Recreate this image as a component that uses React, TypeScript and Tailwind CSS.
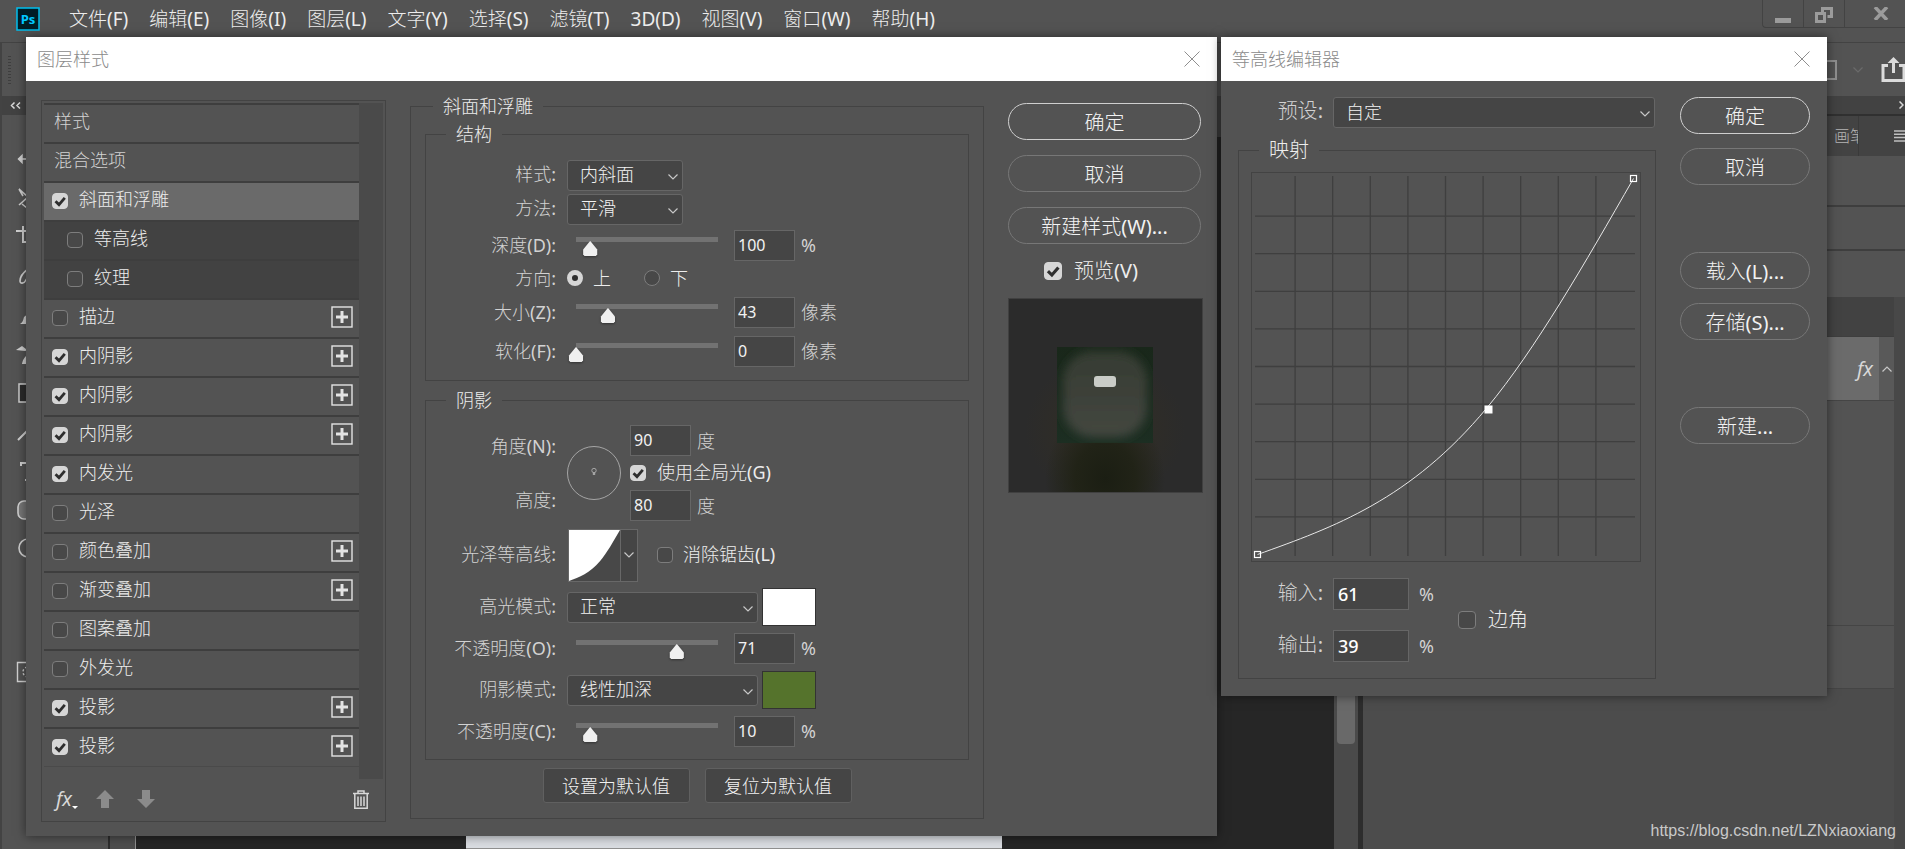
import type { ReactNode } from "react";
import clsx from "clsx";

const menus = [
  "文件(F)",
  "编辑(E)",
  "图像(I)",
  "图层(L)",
  "文字(Y)",
  "选择(S)",
  "滤镜(T)",
  "3D(D)",
  "视图(V)",
  "窗口(W)",
  "帮助(H)",
];

const effects = [
  { name: "斜面和浮雕", checked: true, kind: "active" },
  { name: "等高线", checked: false, kind: "sub" },
  { name: "纹理", checked: false, kind: "sub" },
  { name: "描边", checked: false, add: true },
  { name: "内阴影", checked: true, add: true },
  { name: "内阴影", checked: true, add: true },
  { name: "内阴影", checked: true, add: true },
  { name: "内发光", checked: true },
  { name: "光泽", checked: false },
  { name: "颜色叠加", checked: false, add: true },
  { name: "渐变叠加", checked: false, add: true },
  { name: "图案叠加", checked: false },
  { name: "外发光", checked: false },
  { name: "投影", checked: true, add: true },
  { name: "投影", checked: true, add: true },
];

const tools: ReactNode[] = [
  <path d="M2 12h10M6 8.5L2.5 12 6 15.5z" fill="#d0d0d0" strokeWidth="1.5" />,
  <path d="M3 3l9 8-9 8M6 18l5 4M3 3l4 7" />,
  <path d="M0 6h12M7 1v16h5" strokeWidth="2" />,
  <path d="M12 5C8 8 4 13 4 17c0 3 4 3 6-1l2-3" />,
  <path d="M4 21c2-1 3-3 4-7l5-4v11z" fill="#d0d0d0" strokeWidth="0" />,
  <path d="M0 8l6-4 4 3 3-1v2l-4 1zM6 22c1-5 3-8 7-10v10z" fill="#d0d0d0" strokeWidth="0" />,
  <path d="M3 3h12v18H3z" fill="#2b2b2b" strokeWidth="1.5" />,
  <path d="M2 20l10-10M11 3v8" strokeWidth="2" />,
  <path d="M5 7V4h10M9 21h6" strokeWidth="2" />,
  <rect x="2" y="3" width="20" height="18" rx="6" fill="#777" />,
  <circle cx="12" cy="11" r="9" />,
];

const contourPath = "M0 376C76.4 348.7 152.9 321.4 229.4 229.4C278.2 170.5 327.1 85.3 376 0";

// CJK stays light, the latin runs are set in regular weight
function Mixed({ text }: { text: string }) {
  return (
    <>
      {text.split(/([\x20-\x7e]+)/).map((part, i) =>
        i % 2 ? (
          <span key={i} className="font-normal">
            {part}
          </span>
        ) : (
          part
        )
      )}
    </>
  );
}

function Chevron({ className }: { className?: string }) {
  return (
    <svg viewBox="0 0 10 6" className={clsx("h-[6px] w-[10px]", className)} fill="none" stroke="#c8c8c8" strokeWidth="1.2">
      <path d="M.5.5 5 5 9.5.5" />
    </svg>
  );
}

function CheckBox({ id, checked = false, large = false }: { id: string; checked?: boolean; large?: boolean }) {
  return (
    <span className={clsx("relative flex shrink-0", large ? "size-[18px]" : "size-4")}>
      <input
        id={id}
        type="checkbox"
        defaultChecked={checked}
        className="peer size-full appearance-none rounded-[4px] border border-[#7d7d7d] bg-[#484848] checked:border-[#d6d6d6] checked:bg-[#d6d6d6]"
      />
      <svg
        viewBox="0 0 16 16"
        className="pointer-events-none absolute inset-0 hidden size-full peer-checked:block"
        fill="none"
        stroke="#2e2e2e"
        strokeWidth="2.8"
      >
        <path d="M3.5 8.2 7 11.6 12.8 4.8" />
      </svg>
    </span>
  );
}

function Select({ id, value, className }: { id: string; value: string; className: string }) {
  return (
    <span className={clsx("relative flex", className)}>
      <select
        id={id}
        defaultValue={value}
        className="h-[31px] w-full appearance-none rounded-[3px] border border-[#666] bg-[#454545] pb-0.5 pl-3 leading-6 text-[#f2f2f2]"
      >
        <option>{value}</option>
      </select>
      <Chevron className="pointer-events-none absolute right-[5px] top-[14px]" />
    </span>
  );
}

function NumberBox({ id, value }: { id: string; value: string }) {
  return (
    <input
      id={id}
      type="text"
      defaultValue={value}
      className="h-[31px] w-[61px] border border-[#666] bg-[#454545] pb-0.5 pl-[3px] text-base font-normal text-[#f2f2f2]"
    />
  );
}

function Row({ label, htmlFor, className, children }: { label: string; htmlFor?: string; className: string; children: ReactNode }) {
  return (
    <div className={clsx("flex items-center", className)}>
      <label htmlFor={htmlFor} className="mr-[11px] w-[130px] pb-0.5 text-right text-[#d2d2d2]">
        <Mixed text={label} />
      </label>
      {children}
    </div>
  );
}

function SliderRow({ id, label, value, max, unit }: { id: string; label: string; value: number; max: number; unit: string }) {
  return (
    <Row label={label} htmlFor={id} className="h-[39px]">
      <span className="ml-px mr-2 mt-1 flex h-[22px] w-[158px] bg-[linear-gradient(#727272,#727272)] bg-[length:142px_5px] bg-top bg-no-repeat">
        <input
          type="range"
          aria-label={label}
          defaultValue={value}
          max={max}
          className="h-[22px] w-full appearance-none bg-transparent drop-shadow-[0_1px_1px_#333] [&::-webkit-slider-thumb]:mt-0.5 [&::-webkit-slider-thumb]:h-[15px] [&::-webkit-slider-thumb]:w-4 [&::-webkit-slider-thumb]:appearance-none [&::-webkit-slider-thumb]:bg-[#f0f0f0] [&::-webkit-slider-thumb]:[clip-path:polygon(50%_0,56%_6%,94%_56%,94%_88%,86%_100%,14%_100%,6%_88%,6%_56%,44%_6%)]"
        />
      </span>
      <NumberBox id={id} value={String(value)} />
      <span className="ml-1.5 pb-0.5 text-[#d2d2d2]">
        <Mixed text={unit} />
      </span>
    </Row>
  );
}

function PillButton({ primary = false, label }: { primary?: boolean; label: string }) {
  return (
    <button
      className={clsx(
        "h-[37px] w-full rounded-full border pt-0.5 text-xl leading-8 text-[#f2f2f2]",
        primary ? "border-[#cfcfcf]" : "border-[#777]"
      )}
    >
      <Mixed text={label} />
    </button>
  );
}

function DialogTitle({ children }: { children: ReactNode }) {
  return (
    <div className="flex h-11 items-center justify-between bg-white pl-[11px] pr-[17px]">
      <h2 className="text-lg leading-6 text-[#8a8a8a]">{children}</h2>
      <button aria-label="关闭">
        <svg viewBox="0 0 16 16" className="size-4" fill="none" stroke="#8f8f8f">
          <path d="M.5.5l15 15M15.5.5l-15 15" />
        </svg>
      </button>
    </div>
  );
}

function FieldSet({ title, className, outer = false, children }: { title: string; className?: string; outer?: boolean; children: ReactNode }) {
  return (
    <fieldset className={clsx("min-w-0 border border-[#434343]", className)}>
      <legend className={clsx("px-[10px] leading-6 text-[#ededed]", outer ? "ml-2" : "ml-5")}>{title}</legend>
      {children}
    </fieldset>
  );
}

function FxGlyph() {
  return <span className="font-['Noto_Sans',sans-serif] text-xl font-normal italic leading-6 text-[#d8d8d8]">fx</span>;
}

function StyleList() {
  return (
    <div className="flex w-[345px] flex-col border border-[#434343] p-0.5">
      <div className="flex">
        <ul className="flex-1 pb-3">
          {["样式", "混合选项"].map((name) => (
            <li key={name} className="flex h-[39px] items-center border-t-2 border-[#3e3e3e] pb-1.5 pl-[10px] text-[#d2d2d2]">
              {name}
            </li>
          ))}
          {effects.map((item, i) => (
            <li
              key={i}
              className={clsx(
                "flex h-[39px] items-center border-t-2 border-[#3e3e3e] pb-0.5 pr-1.5",
                item.kind === "active" && "bg-[#6a6a6a]",
                item.kind === "sub" ? "bg-[#424242] pl-[23px]" : "pl-2"
              )}
            >
              <CheckBox id={`effect-${i}`} checked={item.checked} />
              <label htmlFor={`effect-${i}`} className="ml-[11px] flex-1 pb-1 text-[#ededed]">
                {item.name}
              </label>
              {item.add && (
                <button aria-label="添加" className="mb-0.5">
                  <svg viewBox="0 0 22 22" className="size-[22px]" fill="none" stroke="#e4e4e4">
                    <rect x="1" y="1" width="20" height="20" strokeWidth="1.4" />
                    <path d="M11 5v12M5 11h12" strokeWidth="3" />
                  </svg>
                </button>
              )}
            </li>
          ))}
          <li className="border-t border-[#4a4a4a]" />
        </ul>
        <div className="w-6 bg-[#4a4a4a]" />
      </div>
      <div className="flex h-10 items-center pl-3 pr-[14px]">
        <button aria-label="效果" className="flex items-end">
          <FxGlyph />
          <svg viewBox="0 0 6 3" className="mb-0.5 h-[3px] w-[6px]" fill="#fff">
            <path d="M0 0h6L3 3z" />
          </svg>
        </button>
        <button aria-label="上移" className="ml-[18px]">
          <svg viewBox="0 0 18 18" className="size-[18px]" fill="#8b8b8b">
            <path d="M9 0l9 9h-5v9H5V9H0z" />
          </svg>
        </button>
        <button aria-label="下移" className="ml-[23px] flex-1">
          <svg viewBox="0 0 18 18" className="size-[18px]" fill="#8b8b8b">
            <path d="M9 18l9-9h-5V0H5v9H0z" />
          </svg>
        </button>
        <button aria-label="删除">
          <svg viewBox="0 0 16 19" className="h-[19px] w-4" fill="none" stroke="#d8d8d8" strokeWidth="1.5">
            <path d="M0 3.5h16M5 3V1h6v2M1.8 4v14.2h12.4V4M5 6.5v9.5M8 6.5v9.5M11 6.5v9.5" />
          </svg>
        </button>
      </div>
    </div>
  );
}

function Preview() {
  return (
    <svg viewBox="0 0 193 193" className="w-[195px] border border-[#404040] bg-[#2b2b2b]">
      <defs>
        <radialGradient id="haze">
          <stop offset="0.4" stopColor="#302d26" />
          <stop offset="1" stopColor="#302d26" stopOpacity="0" />
        </radialGradient>
        <radialGradient id="ground">
          <stop offset="0" stopColor="#1b1e13" />
          <stop offset="0.5" stopColor="#212317" />
          <stop offset="1" stopColor="#212317" stopOpacity="0" />
        </radialGradient>
        <filter id="glow" x="-50%" y="-50%" width="200%" height="200%">
          <feGaussianBlur stdDeviation="5" />
        </filter>
        <filter id="spark">
          <feGaussianBlur stdDeviation="0.6" />
        </filter>
        <linearGradient id="leaf" x1="0" y1="0" x2="0" y2="1">
          <stop offset="0" stopColor="#19271a" />
          <stop offset="1" stopColor="#1c2e22" />
        </linearGradient>
        <linearGradient id="inner" x1="0" y1="0" x2="0" y2="1">
          <stop offset="0" stopColor="#353b32" />
          <stop offset="1" stopColor="#444740" />
        </linearGradient>
        <clipPath id="square">
          <rect x="48" y="48" width="96" height="96" />
        </clipPath>
      </defs>
      <ellipse cx="96" cy="130" rx="80" ry="72" fill="url(#haze)" />
      <ellipse cx="96" cy="180" rx="60" ry="72" fill="url(#ground)" />
      <rect x="48" y="48" width="96" height="96" fill="url(#leaf)" />
      <g clipPath="url(#square)">
        <rect x="54" y="52" width="84" height="86" rx="30" fill="url(#inner)" filter="url(#glow)" />
      </g>
      <rect x="85" y="77" width="22" height="11" rx="3" fill="#c9ccc7" filter="url(#spark)" />
    </svg>
  );
}

function LayerStyleDialog() {
  return (
    <section className="absolute left-[26px] top-[37px] w-[1191px] bg-[#535353] text-lg leading-6 shadow-[0_0_10px_rgba(0,0,0,0.5)]">
      <DialogTitle>图层样式</DialogTitle>
      <div className="flex items-start pb-[14px] pl-[15px] pt-[13px]">
        <div className="pt-1.5">
          <StyleList />
        </div>
        <FieldSet title="斜面和浮雕" outer className="ml-6 w-[574px] px-[14px] pb-[15px]">
          <FieldSet title="结构" className="mt-1 pb-[9px] pt-3">
            <Row label="样式:" htmlFor="style" className="h-[34px]">
              <Select id="style" value="内斜面" className="w-[116px]" />
            </Row>
            <Row label="方法:" htmlFor="technique" className="h-[34px]">
              <Select id="technique" value="平滑" className="w-[116px]" />
            </Row>
            <SliderRow id="depth" label="深度(D):" value={100} max={1000} unit="%" />
            <Row label="方向:" className="h-7">
              {["上", "下"].map((name) => (
                <label key={name} className="flex w-[77px] items-center gap-[10px] pb-0.5 text-[#ededed]">
                  <input
                    type="radio"
                    name="direction"
                    defaultChecked={name === "上"}
                    className="size-4 appearance-none rounded-full border border-[#7d7d7d] bg-[#484848] checked:border-[5px] checked:border-[#d6d6d6] checked:bg-[#2e2e2e]"
                  />
                  {name}
                </label>
              ))}
            </Row>
            <SliderRow id="size" label="大小(Z):" value={43} max={191} unit="像素" />
            <SliderRow id="soften" label="软化(F):" value={0} max={16} unit="像素" />
          </FieldSet>
          <FieldSet title="阴影" className="mt-[7px] pb-2">
            <div className="flex pt-[13px]">
              <div className="mr-[11px] flex h-[78px] w-[130px] flex-col justify-between self-center text-right text-[#d2d2d2]">
                <label htmlFor="angle">
                  <Mixed text="角度(N):" />
                </label>
                <label htmlFor="altitude">
                  <Mixed text="高度:" />
                </label>
              </div>
              <svg viewBox="0 0 54 54" className="size-[54px] self-center" fill="none" stroke="#a5a5a5">
                <circle cx="27" cy="27" r="26.5" />
                <circle cx="27" cy="24.5" r="2.2" />
                <path d="M27 26.5v2.5" strokeWidth="2.4" />
              </svg>
              <div className="ml-[9px] flex h-24 flex-col justify-between">
                <div className="flex items-center gap-1.5 text-[#d2d2d2]">
                  <NumberBox id="angle" value="90" />度
                </div>
                <div className="flex items-center gap-[11px]">
                  <CheckBox id="global" checked />
                  <label htmlFor="global" className="pb-0.5 text-[#ededed]">
                    <Mixed text="使用全局光(G)" />
                  </label>
                </div>
                <div className="flex items-center gap-1.5 text-[#d2d2d2]">
                  <NumberBox id="altitude" value="80" />度
                </div>
              </div>
            </div>
            <Row label="光泽等高线:" className="h-16 pt-1">
              <button aria-label="光泽等高线" className="ml-px flex h-[53px] w-[70px] border border-[#686868]">
                <svg viewBox="0 0 376 376" preserveAspectRatio="none" className="h-full w-[51px] bg-[#484848]">
                  <path d={contourPath + "V0H0z"} fill="#fff" />
                </svg>
                <span className="flex h-full flex-1 items-center justify-center border-l border-[#686868] bg-[#454545]">
                  <Chevron />
                </span>
              </button>
              <span className="ml-[19px] mr-[10px]">
                <CheckBox id="antialias" />
              </span>
              <label htmlFor="antialias" className="pb-0.5 text-[#ededed]">
                <Mixed text="消除锯齿(L)" />
              </label>
            </Row>
            <Row label="高光模式:" htmlFor="highlight" className="h-11">
              <Select id="highlight" value="正常" className="w-[191px]" />
              <button aria-label="高光颜色" className="ml-1 h-[38px] w-[54px] border border-[#333] bg-white" />
            </Row>
            <SliderRow id="highlight-opacity" label="不透明度(O):" value={71} max={100} unit="%" />
            <Row label="阴影模式:" htmlFor="shadow" className="h-11">
              <Select id="shadow" value="线性加深" className="w-[191px]" />
              <button aria-label="阴影颜色" className="ml-1 h-[38px] w-[54px] border border-[#333] bg-[#55732c]" />
            </Row>
            <SliderRow id="shadow-opacity" label="不透明度(C):" value={10} max={100} unit="%" />
          </FieldSet>
          <div className="mt-2 flex justify-center gap-[15px]">
            {["设置为默认值", "复位为默认值"].map((name) => (
              <button key={name} className="h-[35px] w-[147px] rounded-[3px] border border-[#606060] bg-[#454545] text-[#f2f2f2]">
                {name}
              </button>
            ))}
          </div>
        </FieldSet>
        <div className="ml-6 flex w-[193px] flex-col gap-[15px] pt-[9px]">
          <PillButton primary label="确定" />
          <PillButton label="取消" />
          <PillButton label="新建样式(W)..." />
          <div className="flex items-center gap-3 pl-9 text-xl leading-6">
            <CheckBox id="preview" checked large />
            <label htmlFor="preview" className="text-[#ededed]">
              <Mixed text="预览(V)" />
            </label>
          </div>
          <Preview />
        </div>
      </div>
    </section>
  );
}

function ContourDialog() {
  const lines = [1, 2, 3, 4, 5, 6, 7, 8, 9];
  return (
    <section className="absolute left-[1221px] top-[37px] w-[606px] bg-[#535353] text-xl leading-6 shadow-[0_0_10px_rgba(0,0,0,0.5)]">
      <DialogTitle>等高线编辑器</DialogTitle>
      <div className="flex items-start px-[17px] pb-[17px] pt-4">
        <div className="w-[419px]">
          <div className="flex items-center">
            <label htmlFor="preset" className="mr-[10px] w-[85px] pb-1 text-right text-[#d2d2d2]">
              <Mixed text="预设:" />
            </label>
            <Select id="preset" value="自定" className="w-[322px] text-lg" />
          </div>
          <FieldSet title="映射" outer className="mt-[10px] pb-4 pl-3 pt-[10px]">
            <svg viewBox="0 0 390 390" className="size-[390px]" fill="none">
              <rect x=".5" y=".5" width="389" height="389" stroke="#434343" />
              {lines.map((n) => (
                <path
                  key={n}
                  d={`M${6.5 + n * 37.6} 4V384M4 ${6.5 + n * 37.6}H384`}
                  stroke="#3f3f3f"
                  strokeWidth="1.3"
                />
              ))}
              <g transform="translate(6.5 6.5)">
                <path d={contourPath} stroke="#e8e8e8" />
                <rect x="-3" y="373" width="6" height="6" stroke="#fff" strokeWidth="1.2" />
                <rect x="373" y="-3" width="6" height="6" stroke="#fff" strokeWidth="1.2" />
                <rect x="227" y="227" width="8" height="8" fill="#fff" />
              </g>
            </svg>
            <div className="mt-4 flex items-center">
              <div className="flex flex-col gap-5">
                {[
                  ["input", "输入:", "61"],
                  ["output", "输出:", "39"],
                ].map(([id, label, value]) => (
                  <div key={id} className="flex items-center">
                    <label htmlFor={id} className="mr-[10px] w-[72px] pb-0.5 text-right text-[#d2d2d2]">
                      <Mixed text={label} />
                    </label>
                    <input
                      id={id}
                      type="text"
                      defaultValue={value}
                      className="h-8 w-[76px] border border-[#666] bg-[#454545] pl-1 text-lg font-medium text-white"
                    />
                    <span className="ml-[10px] text-lg font-normal text-[#d2d2d2]">%</span>
                  </div>
                ))}
              </div>
              <div className="ml-6 flex items-center gap-3">
                <CheckBox id="corner" large />
                <label htmlFor="corner" className="text-[#ededed]">
                  边角
                </label>
              </div>
            </div>
          </FieldSet>
        </div>
        <div className="ml-6 flex w-[130px] flex-col gap-[67px]">
          <div className="flex flex-col gap-[14px]">
            <PillButton primary label="确定" />
            <PillButton label="取消" />
          </div>
          <div className="flex flex-col gap-[14px]">
            <PillButton label="载入(L)..." />
            <PillButton label="存储(S)..." />
          </div>
          <PillButton label="新建..." />
        </div>
      </div>
    </section>
  );
}

function TopBars() {
  return (
    <header>
      <div className="flex h-[42px] items-start justify-between">
        <nav className="flex items-center gap-[21px] pl-4 pt-1.5 text-[19px] leading-[26px] text-[#ededed]">
          <svg viewBox="0 0 24 24" className="mr-2 size-6">
            <rect x="1" y="1" width="22" height="22" fill="#001d26" stroke="#00bfee" strokeWidth="1.5" />
            <text x="12" y="16.5" textAnchor="middle" fontSize="13" fontWeight="700" fill="#00c8ff" fontFamily="Open Sans">
              Ps
            </text>
          </svg>
          {menus.map((name) => (
            <button key={name}>
              <Mixed text={name} />
            </button>
          ))}
        </nav>
        <div className="flex h-7 w-[143px] items-center rounded-bl border-b border-l border-[#434343] text-[#9b9b9b]">
          <button aria-label="最小化" className="flex h-full w-[41px] items-center justify-center border-r border-[#434343]">
            <svg viewBox="0 0 16 16" className="mt-1 size-4" fill="currentColor">
              <path d="M0 10h16v5H0z" />
            </svg>
          </button>
          <button aria-label="还原" className="flex h-full w-[41px] items-center justify-center border-r border-[#434343]">
            <svg viewBox="0 0 18 16" className="mt-0.5 h-4 w-[18px]" fill="none" stroke="currentColor" strokeWidth="3">
              <path d="M7.5 5V1.5h9v8h-4" />
              <path d="M1.5 6.5h8v8h-8z" />
            </svg>
          </button>
          <button aria-label="关闭" className="flex h-full flex-1 items-center justify-end pr-4">
            <svg viewBox="0 0 16 13" className="h-[13px] w-4" fill="none" stroke="currentColor" strokeWidth="3.5">
              <path d="M2 0l12 13M14 0 2 13" />
            </svg>
          </button>
        </div>
      </div>
      <div className="flex h-[54px] items-center justify-between border-l-2 border-t border-[#434343] pl-1.5">
        <div className="h-7 w-[3px] bg-[repeating-linear-gradient(#3e3e3e_0_1px,transparent_1px_3px)]" />
        <div className="flex items-center">
          <span className="h-5 w-7 border-2 border-[#8f8f8f]" />
          <Chevron className="ml-4 opacity-20" />
          <svg viewBox="0 0 24 26" className="ml-[18px] h-[26px] w-6" fill="none" stroke="#dcdcdc" strokeWidth="3">
            <path d="M7 8.5H2v15h21v-15h-5M12.5 16V5" />
            <path d="M12.5 0l6 6h-12z" fill="#dcdcdc" stroke="none" />
          </svg>
        </div>
      </div>
    </header>
  );
}

function Toolbar() {
  return (
    <aside className="w-[108px] border-l-2 border-[#434343]">
      <div className="flex h-[19px] items-center bg-[#424242] pl-2">
        <svg viewBox="0 0 11 7" className="h-[7px] w-[11px]" fill="none" stroke="#d8d8d8" strokeWidth="1.5">
          <path d="M4.5.5l-3 3 3 3M10 .5l-3 3 3 3" />
        </svg>
      </div>
      <div className="pl-[14px] pt-6">
        {tools.map((tool, i) => (
          <div key={i} className="flex h-[39px] items-center">
            <svg viewBox="0 0 24 24" className="size-6" fill="none" stroke="#d0d0d0" strokeWidth="1.6">
              {tool}
            </svg>
          </div>
        ))}
        <svg viewBox="0 0 24 24" className="mt-[92px] size-6" fill="none" stroke="#d0d0d0" strokeWidth="1.4">
          <path d="M1.5 2.5h20v19h-20z" />
          <circle cx="12" cy="12" r="5" strokeDasharray="2 2" />
        </svg>
      </div>
    </aside>
  );
}

function Document() {
  return (
    <main className="flex min-w-0 flex-1 flex-col border-l-2 border-r-[5px] border-[#2d2d2d] bg-[#4d4d4d]">
      <div className="h-[41px] bg-[#424242]" />
      <div className="flex flex-1">
        <div className="w-[26px] border-r border-[#8f8f8f] bg-[#4d4d4d]" />
        <div className="flex flex-1 items-end bg-[#262626] pl-[330px]">
          <div className="h-20 w-[536px] border-b border-[#8f8f8f] bg-[#d9dce1]" />
        </div>
        <div className="flex w-6 flex-col items-center bg-[#4a4a4a]">
          <div className="h-[607px] w-[18px] rounded-b-sm bg-[#696969]" />
        </div>
      </div>
    </main>
  );
}

function Panels() {
  return (
    <aside className="flex w-[542px] flex-col">
      <div className="flex h-[18px] items-center justify-end bg-[#424242] pr-px">
        <svg viewBox="0 0 5 8" className="h-2 w-[5px]" fill="none" stroke="#d8d8d8" strokeWidth="1.5">
          <path d="M.5.5 4 4 .5 7.5" />
        </svg>
      </div>
      <div className="flex h-[42px] items-center justify-end border-t-2 border-[#303030] bg-[#434343]">
        <div className="flex h-full w-[25px] items-center overflow-hidden whitespace-nowrap border-r border-[#3a3a3a] text-base text-[#b5b5b5]">
          画笔
        </div>
        <svg viewBox="0 0 11 12" className="ml-[35px] h-3 w-[11px]" stroke="#c0c0c0" strokeWidth="1.5">
          <path d="M0 1h11M0 4.3h11M0 7.6h11M0 11h11" />
        </svg>
      </div>
      <div className="h-[51px] border-b-2 border-[#3e3e3e]" />
      <div className="h-11 border-b-2 border-[#3e3e3e]" />
      <div className="h-[46px]" />
      <div className="flex flex-1">
        <div className="flex flex-1 flex-col bg-[#4c4c4c]">
          <div className="h-10 border-b border-[#3e3e3e] bg-[#424242]" />
          <div className="flex h-[63px]">
            <div className="flex flex-1 items-center justify-end bg-[#6b6b6b] pr-1.5">
              <FxGlyph />
            </div>
            <div className="flex w-[15px] items-center justify-center bg-[#595959]">
              <Chevron className="rotate-180" />
            </div>
          </div>
          <div className="h-[226px] border-y border-[#454545] bg-[#535353]" />
          <div className="h-[63px] border-b border-[#454545] bg-[#535353]" />
        </div>
        <div className="w-[11px] bg-[#484848]" />
      </div>
    </aside>
  );
}

export default function App() {
  return (
    <div className="relative flex h-screen flex-col overflow-hidden bg-[#535353] font-['Noto_Sans','Noto_Sans_CJK_SC',sans-serif] font-light">
      <TopBars />
      <div className="flex min-h-0 flex-1">
        <Toolbar />
        <Document />
        <Panels />
      </div>
      <LayerStyleDialog />
      <ContourDialog />
      <a
        href="#blog"
        className="absolute bottom-1.5 right-[9px] font-['Liberation_Sans',sans-serif] text-base font-normal text-[#c9c9c9]"
      >
        https://blog.csdn.net/LZNxiaoxiang
      </a>
    </div>
  );
}
